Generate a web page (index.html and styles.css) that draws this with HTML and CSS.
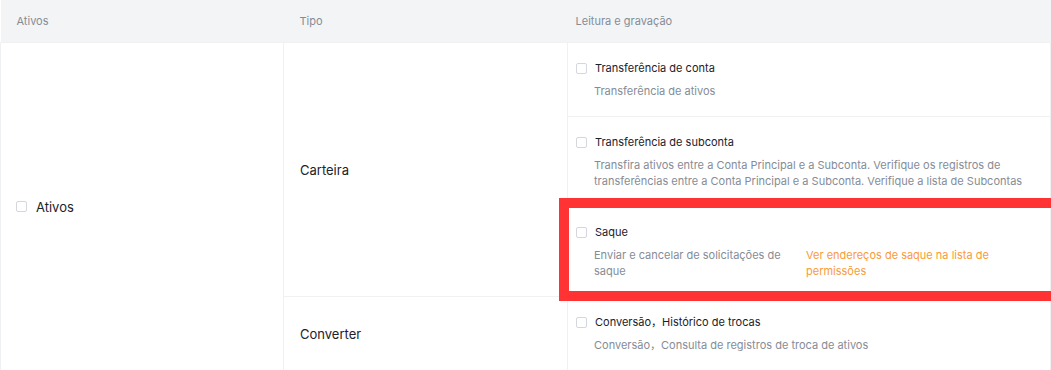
FILE: index.html
```html
<!DOCTYPE html>
<html>
<head>
  <title>Permissões da API</title>
  <link rel="stylesheet" href="styles.css">
</head>
<body>
  <table class="perm-table">
    <colgroup>
      <col class="col-asset">
      <col class="col-type">
      <col class="col-perm">
    </colgroup>
    <thead>
      <tr>
        <th>Ativos</th>
        <th>Tipo</th>
        <th class="th-perm">Leitura e gravação</th>
      </tr>
    </thead>
    <tbody>
      <tr>
        <td class="cell-asset" rowspan="4">
          <label class="check-line big"><span class="box"></span>Ativos</label>
        </td>
        <td class="cell-type" rowspan="3">Carteira</td>
        <td class="cell-perm">
          <label class="check-line"><span class="box"></span>Transferência de conta</label>
          <div class="desc">Transferência de ativos</div>
        </td>
      </tr>
      <tr>
        <td class="cell-perm">
          <label class="check-line"><span class="box"></span>Transferência de subconta</label>
          <div class="desc">Transfira ativos entre a Conta Principal e a Subconta. Verifique os registros de transferências entre a Conta Principal e a Subconta. Verifique a lista de Subcontas</div>
        </td>
      </tr>
      <tr>
        <td class="cell-perm marked">
          <label class="check-line"><span class="box"></span>Saque</label>
          <div class="desc split">
            <span class="desc-text">Enviar e cancelar de solicitações de saque</span>
            <a href="#" class="link">Ver endereços de saque na lista de permissões</a>
          </div>
          <!-- annotation frame -->
          <div class="highlight"></div>
        </td>
      </tr>
      <tr>
        <td class="cell-type">Converter</td>
        <td class="cell-perm">
          <label class="check-line"><span class="box"></span>Conversão，Histórico de trocas</label>
          <div class="desc">Conversão，Consulta de registros de troca de ativos</div>
        </td>
      </tr>
    </tbody>
  </table>
</body>
</html>
```

FILE: styles.css
```css
body {
  margin: 0;
  padding: 0;
  background-color: #fff;
  font-family: Inter, "Noto Sans CJK SC", sans-serif;
  color: #1d2129;
}

.perm-table {
  width: 1051px;
  border-collapse: collapse;
  table-layout: fixed;
}

.col-asset {
  width: 283px;
}

.col-type {
  width: 284px;
}

.perm-table th {
  height: 42px;
  padding: 0 16px;
  background-color: #f3f4f6;
  color: #868c96;
  font-size: 11px;
  font-weight: 400;
  text-align: left;
}

.perm-table th.th-perm {
  padding-left: 8px;
}

.perm-table td {
  border: 1px solid #f0f1f3;
  vertical-align: middle;
}

.cell-asset {
  padding: 0 15px;
}

.cell-type {
  padding: 0 16px;
  font-size: 13px;
}

.cell-perm {
  padding: 16px 16px 17px 8px;
  font-size: 11px;
}

.cell-perm.marked {
  position: relative;
}

.check-line {
  display: flex;
  align-items: center;
  gap: 8px;
  line-height: 18px;
  cursor: pointer;
}

.check-line.big {
  font-size: 13px;
  gap: 9px;
}

.box {
  width: 9px;
  height: 9px;
  border: 1px solid #d4d7dd;
  border-radius: 2px;
  background-color: #fff;
}

.desc {
  margin-top: 6px;
  margin-left: 18px;
  color: #868c96;
  line-height: 16px;
}

.desc.split {
  display: flex;
  gap: 12px;
}

.desc-text {
  width: 200px;
}

.link {
  width: 220px;
  color: #fa9a38;
  text-decoration: none;
}

.highlight {
  position: absolute;
  top: -9px;
  left: -9px;
  right: -12px;
  bottom: -5px;
  border: 10px solid #ff3333;
  pointer-events: none;
}
```
